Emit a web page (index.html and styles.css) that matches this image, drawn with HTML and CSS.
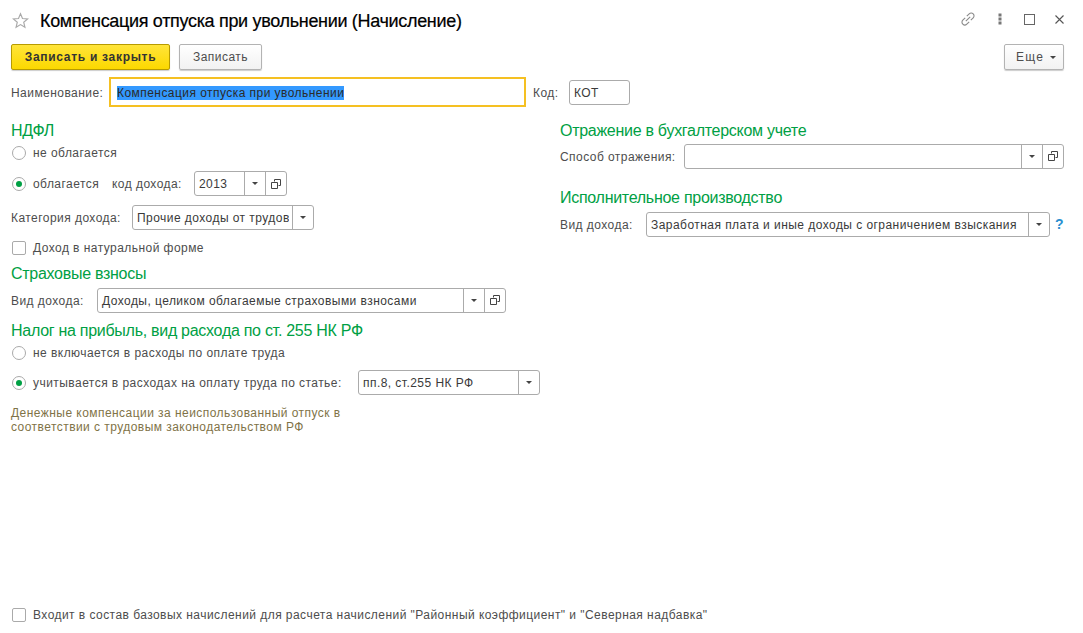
FILE: index.html
```html
<!DOCTYPE html>
<html lang="ru">
<head>
    <meta charset="UTF-8">
    <title>Компенсация отпуска при увольнении (Начисление)</title>
    <link rel="stylesheet" href="styles.css">
</head>
<body>

    <svg class="defs" width="0" height="0">
        <symbol id="open" viewBox="0 0 12 12">
            <path d="M4.5 3.5V1.5H10.5V7.5H8.5M1.5 4.5H7.5V10.5H1.5Z" fill="none" stroke="#444"/>
        </symbol>
    </svg>

    <div class="form">
        <!-- Title -->
        <div class="header">
            <svg class="star" width="17" height="17" viewBox="0 0 18 18">
                <path d="M9 1.8L11.1 6.9L16.6 7.3L12.4 10.8L13.7 16.2L9 13.3L4.3 16.2L5.6 10.8L1.4 7.3L6.9 6.9Z" fill="#fff" stroke="#a9a9a9" stroke-width="1.2"/>
            </svg>
            <h1>Компенсация отпуска при увольнении (Начисление)</h1>
            <div class="window-icons">
                <svg class="icon-gap" width="16" height="16" viewBox="0 0 16 16">
                    <path d="M6.8 5.2L9.2 2.8A2.6 2.6 0 0 1 13.2 6.8L10.8 9.2M9.2 10.8L6.8 13.2A2.6 2.6 0 0 1 2.8 9.2L5.2 6.8M5.8 10.2L10.2 5.8" fill="none" stroke="#8a8a8a" stroke-width="1.1"/>
                </svg>
                <svg class="icon-gap" width="4" height="12" viewBox="0 0 4 12">
                    <path d="M0.5 0.5h3v3h-3zM0.5 4.5h3v3h-3zM0.5 8.5h3v3h-3z" fill="#777"/>
                </svg>
                <svg width="11" height="11" viewBox="0 0 11 11">
                    <rect x="0.5" y="0.5" width="10" height="10" fill="none" stroke="#666"/>
                </svg>
                <svg width="9" height="9" viewBox="0 0 9 9">
                    <path d="M0.5 0.5L8.5 8.5M8.5 0.5L0.5 8.5" stroke="#555" stroke-width="1.1"/>
                </svg>
            </div>
        </div>

        <!-- Buttons -->
        <div class="toolbar">
            <button class="btn btn-primary">Записать и закрыть</button>
            <button class="btn btn-save">Записать</button>
            <button class="btn btn-more">Еще<span class="arrow"></span></button>
        </div>

        <!-- Name and code -->
        <div class="name-row">
            <span class="label name-label">Наименование:</span>
            <div class="name-input"><span class="selected">Компенсация отпуска при увольнении</span></div>
            <span class="label code-label">Код:</span>
            <div class="field code-field"><span class="field-text">КОТ</span></div>
        </div>

        <div class="columns">
            <div class="col-left">
                <h2>НДФЛ</h2>
                <label class="option option-first"><span class="radio"></span>не облагается</label>
                <div class="row row-taxed">
                    <label class="option option-taxed"><span class="radio checked"></span>облагается</label>
                    <span class="label code-income">код дохода:</span>
                    <div class="field income-field">
                        <span class="field-text">2013</span>
                        <span class="field-btn"><span class="arrow"></span></span>
                        <span class="field-btn"><svg width="12" height="12"><use href="#open"/></svg></span>
                    </div>
                </div>
                <div class="row row-category">
                    <span class="label category-label">Категория дохода:</span>
                    <div class="field category-field">
                        <span class="field-text">Прочие доходы от трудовой деятельности</span>
                        <span class="field-btn"><span class="arrow"></span></span>
                    </div>
                </div>
                <label class="option option-natural"><span class="checkbox"></span>Доход в натуральной форме</label>

                <h2 class="insurance-title">Страховые взносы</h2>
                <div class="row row-insurance">
                    <span class="label insurance-label">Вид дохода:</span>
                    <div class="field insurance-field">
                        <span class="field-text">Доходы, целиком облагаемые страховыми взносами</span>
                        <span class="field-btn"><span class="arrow"></span></span>
                        <span class="field-btn"><svg width="12" height="12"><use href="#open"/></svg></span>
                    </div>
                </div>

                <h2 class="profit-title">Налог на прибыль, вид расхода по ст. 255 НК РФ</h2>
                <label class="option option-first"><span class="radio"></span>не включается в расходы по оплате труда</label>
                <div class="row row-article">
                    <label class="option option-article"><span class="radio checked"></span>учитывается в расходах на оплату труда по статье:</label>
                    <div class="field article-field">
                        <span class="field-text">пп.8, ст.255 НК РФ</span>
                        <span class="field-btn"><span class="arrow"></span></span>
                    </div>
                </div>
                <p class="note">Денежные компенсации за неиспользованный отпуск в<br>соответствии с трудовым законодательством РФ</p>
            </div>

            <div class="col-right">
                <h2>Отражение в бухгалтерском учете</h2>
                <div class="row row-method">
                    <span class="label method-label">Способ отражения:</span>
                    <div class="field method-field">
                        <span class="field-text"></span>
                        <span class="field-btn"><span class="arrow"></span></span>
                        <span class="field-btn"><svg width="12" height="12"><use href="#open"/></svg></span>
                    </div>
                </div>

                <h2 class="enforcement-title">Исполнительное производство</h2>
                <div class="row row-enforcement">
                    <span class="label enforcement-label">Вид дохода:</span>
                    <div class="field enforcement-field">
                        <span class="field-text">Заработная плата и иные доходы с ограничением взыскания</span>
                        <span class="field-btn"><span class="arrow"></span></span>
                    </div>
                    <span class="help">?</span>
                </div>
            </div>
        </div>

        <label class="option footer"><span class="checkbox"></span>Входит в состав базовых начислений для расчета начислений "Районный коэффициент" и "Северная надбавка"</label>
    </div>

</body>
</html>
```

FILE: styles.css
```css
/* General */
body {
    margin: 0;
    background: #fff;
    color: #4d4d4d;
    font-family: "Liberation Sans", Arial, sans-serif;
    font-size: 12px;
    letter-spacing: 0.45px;
}

.defs {
    display: block;
    height: 0;
}

.form {
    width: 1083px;
    height: 633px;
    display: flex;
    flex-direction: column;
    overflow: hidden;
    box-sizing: border-box;
    padding: 0 19px 0 11px;
}

/* Title */
.header {
    height: 44px;
    display: flex;
    align-items: center;
    flex: none;
}

.star {
    flex: none;
    margin: 0 11px 3px 1px;
}

h1 {
    margin: 0 0 2px;
    color: #000;
    font-size: 18px;
    font-weight: normal;
    letter-spacing: -0.32px;
    -webkit-text-stroke: 0.2px #000;
}

.window-icons {
    margin: 0 0 6px auto;
    display: flex;
    align-items: center;
    gap: 20px;
}

.icon-gap {
    margin-right: 2px;
}

/* Buttons */
.toolbar {
    height: 26px;
    display: flex;
    flex: none;
}

.btn {
    height: 26px;
    box-sizing: border-box;
    padding: 0;
    border: 1px solid #b3b3b3;
    border-radius: 2px;
    background: linear-gradient(#fff, #f2f2f2);
    box-shadow: 0 1px 1px rgba(0, 0, 0, 0.2);
    color: #4d4d4d;
    font: inherit;
    letter-spacing: inherit;
}

.btn-primary {
    width: 159px;
    border-color: #b79b00;
    background: linear-gradient(#ffe43a, #fcd800);
    color: #333;
    font-weight: bold;
    letter-spacing: 0.7px;
}

.btn-save {
    width: 83px;
    margin-left: 9px;
}

.btn-more {
    width: 60px;
    margin-left: auto;
    padding-left: 4px;
    letter-spacing: 1.2px;
}

.btn-more .arrow {
    margin-left: 6px;
}

.arrow {
    display: inline-block;
    vertical-align: middle;
    width: 0;
    height: 0;
    border-left: 3px solid transparent;
    border-right: 3px solid transparent;
    border-top: 3px solid #444;
}

/* Name row */
.name-row {
    height: 30px;
    margin-top: 7px;
    display: flex;
    align-items: center;
    flex: none;
}

.name-label {
    width: 98px;
}

.name-input {
    width: 417px;
    height: 30px;
    box-sizing: border-box;
    border: 2px solid #f5c022;
    padding: 2px 0 0 6px;
    display: flex;
    align-items: center;
    white-space: nowrap;
}

.selected {
    background: #3399ff;
    color: #2a2a2a;
    line-height: 14px;
}

.code-label {
    width: 36px;
    margin-left: 7px;
}

.code-field {
    width: 61px;
}

/* Columns */
.columns {
    display: flex;
    flex: 1;
    margin-top: 13px;
}

.col-left {
    width: 549px;
    flex: none;
}

.col-right {
    flex: 1;
}

h2 {
    margin: 0;
    height: 22px;
    line-height: 22px;
    color: #00a044;
    font-size: 16px;
    font-weight: normal;
    letter-spacing: -0.28px;
}

.row {
    display: flex;
    align-items: center;
    height: 24px;
}

.label {
    flex: none;
    white-space: nowrap;
    padding-top: 1px;
}

/* Fields */
.field {
    height: 25px;
    box-sizing: border-box;
    flex: none;
    display: flex;
    border: 1px solid #ababab;
    border-radius: 3px;
    background: #fff;
    overflow: hidden;
    color: #3a3a3a;
}

.field-text {
    flex: 1;
    min-width: 0;
    margin-right: 3px;
    padding-left: 4px;
    line-height: 25px;
    white-space: nowrap;
    overflow: hidden;
}

.field-btn {
    width: 20px;
    flex: none;
    border-left: 1px solid #ababab;
    display: flex;
    align-items: center;
    justify-content: center;
}

/* Radio and checkbox */
.option {
    display: flex;
    align-items: center;
    white-space: nowrap;
}

.radio,
.checkbox {
    width: 14px;
    height: 14px;
    box-sizing: border-box;
    flex: none;
    margin: 0 7px 0 1px;
    border: 1px solid #aaa;
    background: #fff;
}

.radio {
    border-radius: 50%;
    display: flex;
    align-items: center;
    justify-content: center;
}

.radio.checked::after {
    content: "";
    width: 6px;
    height: 6px;
    border-radius: 50%;
    background: #00a044;
}

.checkbox {
    border-radius: 2px;
}

/* Left column rows */
.option-first {
    height: 22px;
}

.row-taxed {
    height: 25px;
    margin-top: 7px;
}

.option-taxed {
    width: 101px;
    flex: none;
}

.code-income {
    width: 82px;
}

.income-field {
    width: 93px;
}

.row-category {
    height: 25px;
    margin-top: 9px;
}

.category-label {
    width: 121px;
}

.category-field {
    width: 182px;
}

.option-natural {
    height: 14px;
    margin-top: 11px;
}

.insurance-title {
    margin-top: 8px;
}

.row-insurance {
    margin-top: 3px;
}

.insurance-label {
    width: 86px;
}

.insurance-field {
    width: 409px;
}

.profit-title {
    margin-top: 8px;
}

.row-article {
    height: 25px;
    margin-top: 6px;
}

.option-article {
    width: 347px;
    flex: none;
}

.article-field {
    width: 182px;
}

.note {
    margin: 11px 0 0;
    color: #7f7347;
    line-height: 14px;
}

/* Right column rows */
.row-method {
    margin-top: 2px;
}

.method-label {
    width: 124px;
}

.method-field {
    width: 380px;
}

.enforcement-title {
    margin-top: 19px;
}

.row-enforcement {
    margin-top: 3px;
}

.enforcement-label {
    width: 86px;
}

.enforcement-field {
    width: 404px;
}

.help {
    margin-left: 5px;
    color: #2a8fd0;
    font-size: 14px;
    font-weight: bold;
}

.footer {
    height: 14px;
    margin-bottom: 11px;
    flex: none;
}
```
